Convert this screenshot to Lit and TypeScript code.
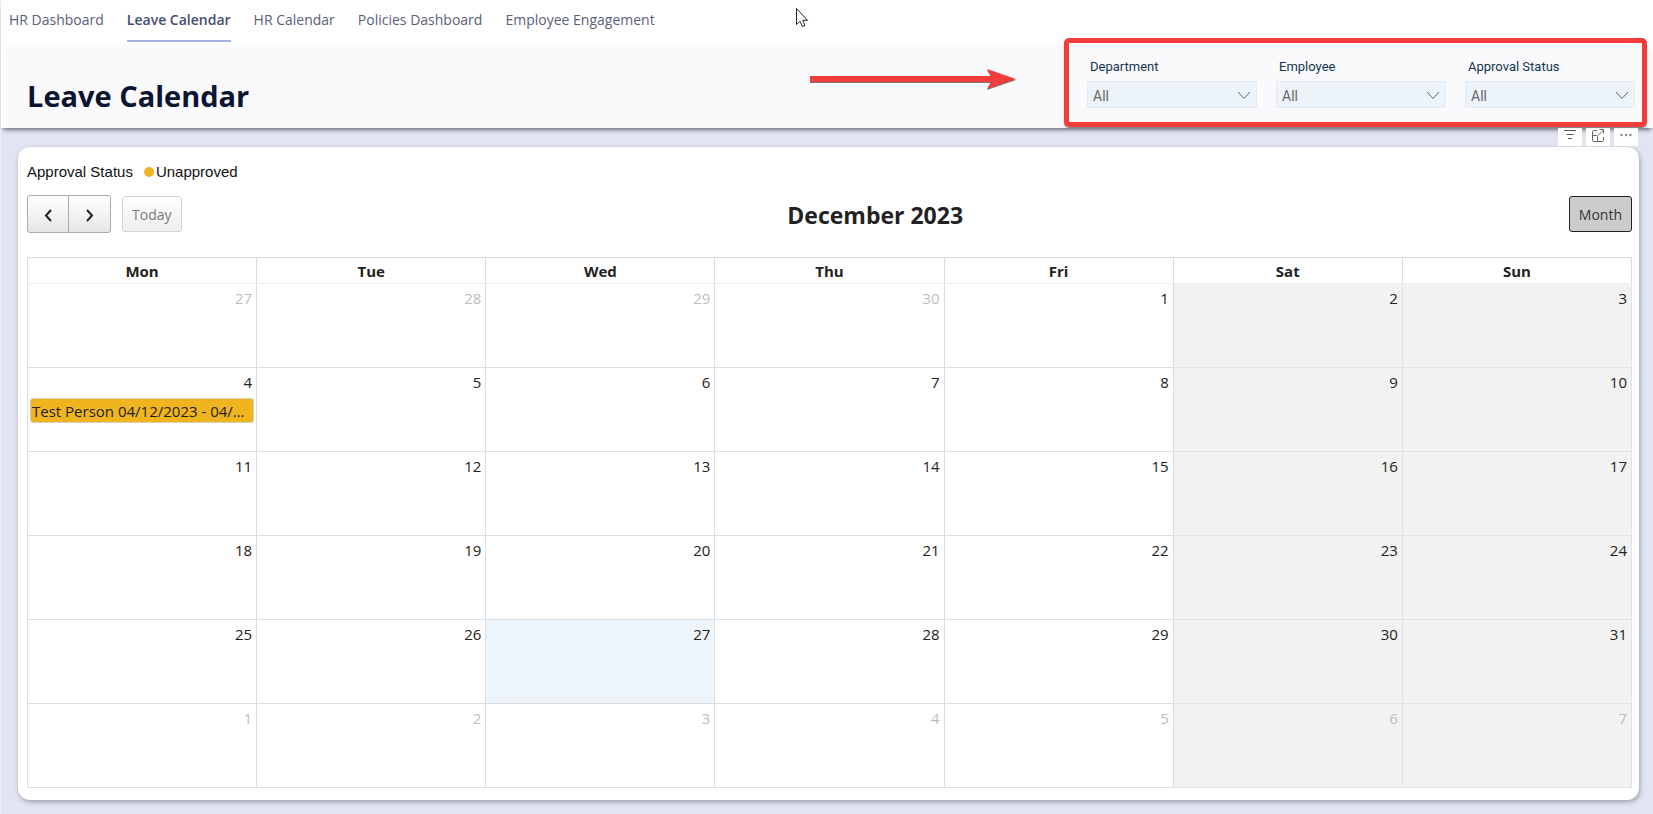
import { LitElement, html, css, svg } from "lit";
import { customElement, state } from "lit/decorators.js";
import { classMap } from "lit/directives/class-map.js";

interface Day {
  n: number;
  other: boolean;
  weekend: boolean;
  today: boolean;
  event?: string;
}

const TABS = ["HR Dashboard", "Leave Calendar", "HR Calendar", "Policies Dashboard", "Employee Engagement"];
const FILTERS = ["Department", "Employee", "Approval Status"];
const WEEKDAYS = ["Mon", "Tue", "Wed", "Thu", "Fri", "Sat", "Sun"];

const buildWeeks = (): Day[][] =>
  Array.from({ length: 6 }, (_, w) =>
    Array.from({ length: 7 }, (_, d) => {
      const date = new Date(2023, 10, 27 + w * 7 + d);
      const december = date.getMonth() === 11;
      const n = date.getDate();
      return {
        n,
        other: !december,
        weekend: d > 4,
        today: december && n === 27,
        event: december && n === 4 ? "Test Person 04/12/2023 - 04/12/2023" : undefined,
      };
    })
  );

@customElement("leave-calendar")
export class LeaveCalendar extends LitElement {
  static styles = css`
    :host {
      display: block;
      color: #222;
      font: 15px/24px "Open Sans", "Noto Sans", sans-serif;
    }
    .legend {
      display: flex;
      align-items: center;
      color: #111;
      font: 15px/18px "Liberation Sans", Arial, sans-serif;
    }
    .dot {
      width: 10px;
      height: 10px;
      margin: 0 2px 0 11px;
      border-radius: 50%;
      background: #f0b41e;
    }
    .toolbar {
      display: flex;
      align-items: center;
      justify-content: space-between;
      margin: 14px 0 24px;
    }
    .left {
      display: flex;
      align-items: center;
      gap: 11px;
    }
    .pair {
      display: flex;
    }
    .btn {
      display: flex;
      align-items: center;
      justify-content: center;
      box-sizing: border-box;
      height: 36px;
      padding: 2px 9px 0;
      border: 1px solid #b9b9b9;
      border-radius: 3px;
      background: linear-gradient(#fff, #e6e6e6);
      color: #333;
      font: inherit;
      font-size: 14px;
    }
    .nav {
      width: 42px;
      height: 38px;
      border-color: #aaa;
    }
    .prev {
      border-radius: 3px 0 0 3px;
    }
    .next {
      width: 43px;
      margin-left: -1px;
      border-radius: 0 3px 3px 0;
    }
    .today-btn {
      opacity: 0.65;
    }
    .month {
      border-color: #222;
      background: #ccc;
    }
    .title {
      margin: 0;
      padding-top: 2px;
      font-size: 23px;
      line-height: 32px;
      font-weight: 700;
    }
    .grid {
      width: 100%;
      border-collapse: collapse;
      table-layout: fixed;
    }
    .grid th,
    .grid td {
      box-sizing: border-box;
      padding: 0;
      border: 1px solid #ddd;
    }
    .grid th {
      height: 26px;
      font-weight: 700;
      border-bottom-color: #eee;
    }
    .grid td {
      height: 84px;
      vertical-align: top;
    }
    .day {
      padding: 2px 4px 0;
      text-align: right;
    }
    .other .day {
      color: #bdbdbd;
    }
    .grid .weekend {
      background: #f2f2f2;
      border-color: #e4e4e4;
    }
    .grid .today {
      background: #edf5fb;
    }
    .event {
      box-sizing: border-box;
      height: 25px;
      margin: 4px 2px 0;
      padding: 0 6px 0 1px;
      overflow: hidden;
      border: 1px solid #d8cfb8;
      border-radius: 3px;
      background: #f0b41e;
      color: #222;
      line-height: 24px;
      text-overflow: ellipsis;
      white-space: nowrap;
    }
  `;

  private weeks = buildWeeks();

  private chevron(d: string) {
    return svg`<svg width="12" height="16" viewBox="0 0 12 16" fill="none" stroke="#222" stroke-width="2"><path d=${d} /></svg>`;
  }

  render() {
    return html`
      <div class="legend"><span>Approval Status</span><span class="dot"></span><span>Unapproved</span></div>
      <div class="toolbar">
        <div class="left">
          <div class="pair">
            <button class="btn nav prev" aria-label="Previous month">${this.chevron("M9 3 4 8.500l5 5.500")}</button>
            <button class="btn nav next" aria-label="Next month">${this.chevron("M3 3l5 5.500-5 5.500")}</button>
          </div>
          <button class="btn today-btn">Today</button>
        </div>
        <h2 class="title">December 2023</h2>
        <button class="btn month" aria-pressed="true">Month</button>
      </div>
      <table class="grid">
        <thead>
          <tr>${WEEKDAYS.map((d) => html`<th scope="col">${d}</th>`)}</tr>
        </thead>
        <tbody>
          ${this.weeks.map(
            (week) => html`<tr>
              ${week.map(
                (d) => html`<td class=${classMap({ other: d.other, weekend: d.weekend, today: d.today })}>
                  <div class="day">${d.n}</div>
                  ${d.event ? html`<div class="event">${d.event}</div>` : null}
                </td>`
              )}
            </tr>`
          )}
        </tbody>
      </table>
    `;
  }
}

@customElement("app-root")
export class AppRoot extends LitElement {
  static styles = css`
    :host {
      display: block;
      box-sizing: border-box;
      min-height: 100vh;
      border-left: 1px solid #eee;
      background: #e1e5f1;
    }
    .top {
      position: relative;
      background: #fff;
      box-shadow: 0 4px 4px -2px #6f7480;
    }
    .tabs {
      display: flex;
      gap: 23px;
      height: 44px;
      padding-left: 8px;
    }
    .tab {
      box-sizing: border-box;
      height: 42px;
      padding-top: 10px;
      border-bottom: 2px solid transparent;
      color: #5b6078;
      font: 14px/20px "Open Sans", "Noto Sans", sans-serif;
      text-decoration: none;
      white-space: nowrap;
    }
    .active {
      border-bottom-color: #a3b3df;
      color: #454d6d;
      font-weight: 600;
    }
    .hero {
      display: flex;
      justify-content: space-between;
      box-sizing: border-box;
      height: 84px;
      margin-left: 2px;
      padding: 0 18px 0 24px;
      border-radius: 14px 12px 0 0;
      background: #fafafc;
    }
    .heading {
      margin: 31px 0 0;
      color: #0b1430;
      font: 700 29px/42px "Open Sans", "Noto Sans", sans-serif;
    }
    .filters {
      display: flex;
      gap: 19px;
      padding-top: 13px;
    }
    .filter {
      display: flex;
      flex-direction: column;
      width: 170px;
      color: #12354f;
      font: 14px/20px Roboto, sans-serif;
    }
    .name {
      padding: 0 0 4px 3px;
      font-size: 13px;
    }
    .field {
      display: grid;
      align-items: center;
    }
    .field > * {
      grid-area: 1 / 1;
    }
    .select {
      box-sizing: border-box;
      width: 100%;
      height: 27px;
      padding: 3px 5px 0;
      border: 1px solid #e6ecf2;
      border-radius: 0;
      appearance: none;
      background: #ecf3fb;
      color: #666;
      font: inherit;
    }
    .caret {
      justify-self: end;
      margin: 1px 6px 0 0;
      pointer-events: none;
    }
    .frame {
      position: absolute;
      z-index: 2;
      top: 38px;
      right: 6px;
      box-sizing: border-box;
      width: 583px;
      height: 89px;
      border: 5px solid #f33c3c;
      border-radius: 5px;
      box-shadow: 0 1px 1px #777;
      pointer-events: none;
    }
    .arrow {
      position: absolute;
      top: 68px;
      right: 636px;
    }
    .cursor {
      position: absolute;
      top: 7px;
      left: 794px;
    }
    .actions {
      position: relative;
      display: flex;
      justify-content: flex-end;
      gap: 4px;
      height: 19px;
      padding-right: 15px;
    }
    .action {
      display: flex;
      justify-content: center;
      width: 24px;
      height: 18px;
      padding: 0;
      border: 0;
      background: #fff;
    }
    .card {
      margin: 0 14px 14px 17px;
      padding: 16px 7px 12px 9px;
      border-radius: 12px;
      background: #fff;
      box-shadow: 1px 2px 5px #9a9fae;
    }
  `;

  @state() private current = 1;

  render() {
    return html`
      <header class="top">
        <nav class="tabs">
          ${TABS.map(
            (t, i) => html`<a href="#" class=${classMap({ tab: true, active: i === this.current })}
              @click=${(e: Event) => { e.preventDefault(); this.current = i; }}>${t}</a>`
          )}
        </nav>
        <div class="hero">
          <h1 class="heading">Leave Calendar</h1>
          <div class="filters">
            ${FILTERS.map(
              (f) => html`<label class="filter">
                <span class="name">${f}</span>
                <span class="field">
                  <select class="select"><option>All</option></select>
                  <svg class="caret" width="14" height="9" viewBox="0 0 14 9" fill="none" stroke="#666"><path d="M1 1l6 6.500 6-6.500" /></svg>
                </span>
              </label>`
            )}
          </div>
        </div>
        <div class="frame"></div>
        <svg class="arrow" width="207" height="22" viewBox="0 0 207 22">
          <path d="M0 9H181L177 2 206 12 177 22 181 15H0Z" fill="#777" />
          <path d="M0 8H181L177 1 206 11 177 21 181 14H0Z" fill="#f33c3c" />
        </svg>
        <svg class="cursor" width="14" height="21" viewBox="0 0 14 21" fill="#fff" stroke="#223"><path d="M1.500 1.500V17.500L5 14.200 7.500 19.500 10 18.400 7.700 13.300H12.500Z" /></svg>
      </header>
      <div class="actions">
        <button class="action" aria-label="Filters">
          <svg width="14" height="14" viewBox="0 0 14 14" stroke="#555"><path d="M1 2.500H13M3.500 6.500H10.500M5 10.500H9" /></svg>
        </button>
        <button class="action" aria-label="Focus mode">
          <svg width="14" height="14" viewBox="0 0 14 14" fill="none" stroke="#666"><path d="M6 2.500H2.500Q1.500 2.500 1.500 3.500V12Q1.500 13.500 3 13.500H11.500Q12.500 13.500 12.500 12.500V9M1.500 7.500H5.500Q6.500 7.500 6.500 8.500V13.500M7 7.500L12.500 2M8.500 1.500H12.500V5.500" /></svg>
        </button>
        <button class="action" aria-label="More options">
          <svg width="14" height="14" viewBox="0 0 14 14" fill="#888"><circle cx="2.500" cy="7" r="1.200" /><circle cx="7" cy="7" r="1.200" /><circle cx="11.500" cy="7" r="1.200" /></svg>
        </button>
      </div>
      <main class="card"><leave-calendar></leave-calendar></main>
    `;
  }
}
